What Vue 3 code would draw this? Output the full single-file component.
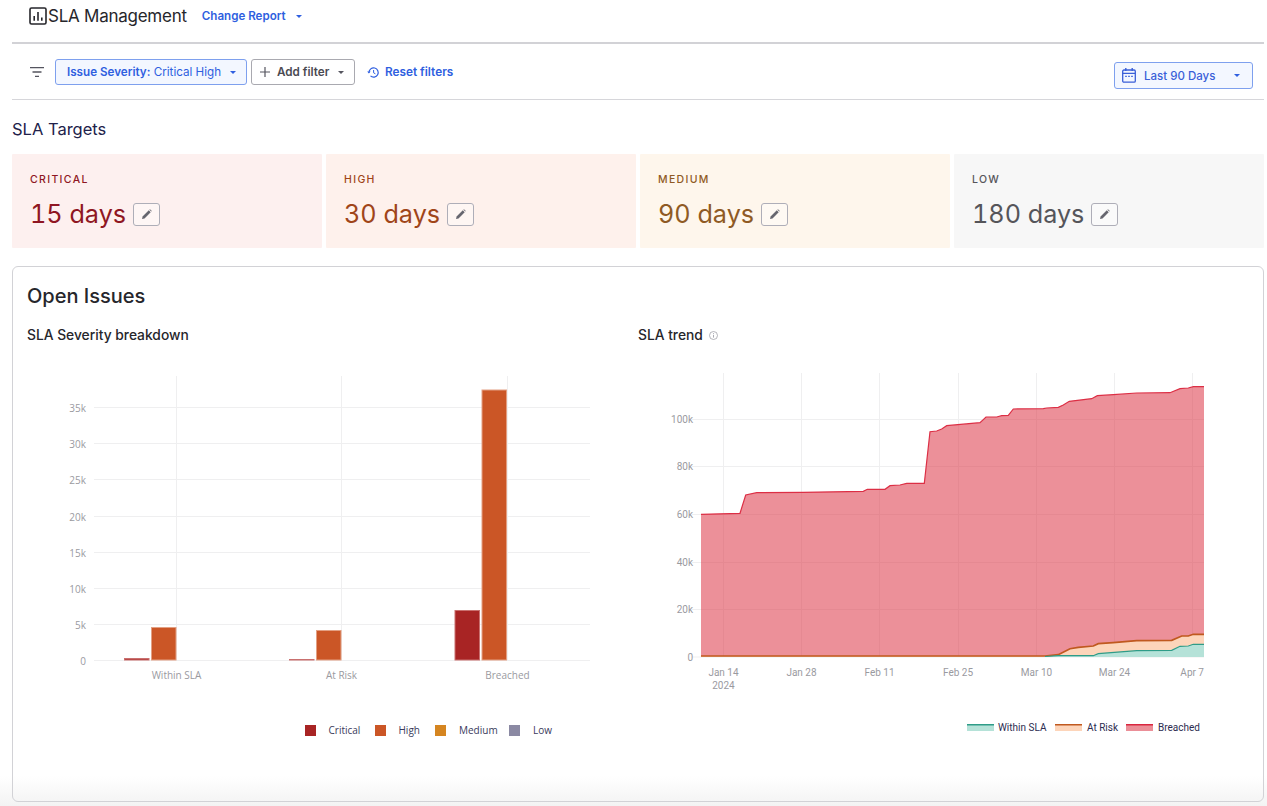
<template>
  <div class="page">
    <header class="top-bar">
      <svg class="report-icon" width="18" height="18" viewBox="0 0 18 18" fill="none">
        <rect x="1" y="1" width="16" height="16" rx="1.5" stroke="#26262b" stroke-width="1.6" />
        <path d="M5.2 9v4.8M9 5v8.8M12.8 10.5v3.3" stroke="#26262b" stroke-width="1.6" />
      </svg>
      <h1 class="report-title">SLA Management</h1>
      <button class="change-report">
        Change Report
        <span class="caret"></span>
      </button>
    </header>

    <section class="filter-bar">
      <div class="filter-left">
        <svg class="filter-icon" width="14" height="10" viewBox="0 0 14 10">
          <path d="M0 .7h14M2.5 5h9M5 9.3h4" stroke="#55555f" stroke-width="1.3" />
        </svg>
        <button class="chip chip-active">
          <span><b>Issue Severity:</b> Critical High</span>
          <span class="caret"></span>
        </button>
        <button class="chip chip-plain">
          <svg width="10" height="10" viewBox="0 0 10 10">
            <path d="M5 0v10M0 5h10" stroke="#55555f" stroke-width="1.2" />
          </svg>
          <span class="add-label">Add filter</span>
          <span class="caret caret-dark"></span>
        </button>
        <button class="reset">
          <svg width="13" height="13" viewBox="0 0 13 13" fill="none">
            <path d="M2 6.5a4.6 4.6 0 1 1 1.5 3.4" stroke="#2f5fe0" stroke-width="1.2" />
            <path d="M.2 5.6h3.4L1.9 7.6z" fill="#2f5fe0" />
            <path d="M6.6 4v2.8l1.8 1" stroke="#2f5fe0" stroke-width="1" />
          </svg>
          Reset filters
        </button>
      </div>
      <button class="date-btn">
        <svg width="14" height="15" viewBox="0 0 14 15" fill="none">
          <rect x=".7" y="2" width="12.6" height="12.2" rx="1.2" stroke="#3a5fd8" stroke-width="1.3" />
          <path d="M.7 5.4h12.6M3.8 0v3M10.2 0v3" stroke="#3a5fd8" stroke-width="1.4" />
          <path d="M3.2 8.4h1.6M6.2 8.4h1.6M9.2 8.4h1.6" stroke="#3a5fd8" stroke-width="1.4" />
        </svg>
        <span class="date-label">Last 90 Days</span>
        <span class="caret"></span>
      </button>
    </section>

    <h2 class="targets-title">SLA Targets</h2>
    <section class="targets">
      <div v-for="t in targets" :key="t.label" class="target" :style="{ background: t.bg, color: t.color }">
        <div class="target-label">{{ t.label }}</div>
        <div class="target-value">
          <span>{{ t.value }}</span>
          <button class="edit">
            <svg width="10" height="10" viewBox="0 0 10 10">
              <path d="M0 10l.6-2.5L6.8 1.3l1.9 1.9L2.5 9.4z" fill="#66666f" />
              <path d="M7.4.7l.6-.5 1.8 1.8-.5.6z" fill="#66666f" />
            </svg>
          </button>
        </div>
      </div>
    </section>

    <section class="issues">
      <h2 class="issues-title">Open Issues</h2>
      <div class="charts">
        <div class="chart-col">
          <h3 class="chart-title">SLA Severity breakdown</h3>
          <svg class="chart" width="585" height="400" viewBox="27 350 585 400">
            <g stroke="#efeff0" stroke-width="1">
              <line v-for="g in barGrid" :key="g.label" x1="94" x2="590" :y1="g.y" :y2="g.y" />
              <line v-for="c in barCats" :key="c.label" :x1="c.x" :x2="c.x" y1="376" y2="660" />
            </g>
            <g class="tick-open">
              <text v-for="g in barGrid" :key="g.label" x="86" :y="g.y + 4" text-anchor="end">{{ g.label }}</text>
              <text v-for="c in barCats" :key="c.label" :x="c.x" y="679" text-anchor="middle">{{ c.label }}</text>
            </g>
            <rect v-for="(b, i) in bars" :key="i" :x="b.x" :y="b.y" width="24.5" :height="660 - b.y"
              :fill="b.color" :stroke="b.edge" stroke-width="1" />
            <g v-for="l in barLegend" :key="l.label">
              <rect :x="l.x" y="725" width="11" height="11" :fill="l.color" />
              <text class="legend-open" :x="l.tx" y="734">{{ l.label }}</text>
            </g>
          </svg>
        </div>
        <div class="chart-col">
          <h3 class="chart-title">
            SLA trend
            <svg class="info" width="9" height="9" viewBox="0 0 9 9" fill="none">
              <circle cx="4.5" cy="4.5" r="4" stroke="#a2a2aa" stroke-width=".8" />
              <path d="M4.5 4v2.6M4.5 2.2v1" stroke="#a2a2aa" stroke-width=".9" />
            </svg>
          </h3>
          <svg class="chart" width="612" height="400" viewBox="638 350 612 400">
            <g stroke="#efeff0" stroke-width="1">
              <line v-for="g in trendGrid" :key="g.label" x1="692" x2="1204" :y1="g.y" :y2="g.y" />
              <line v-for="x in trendCols" :key="x" :x1="x" :x2="x" y1="373" y2="657" />
            </g>
            <path :d="breachedArea" fill="#dc3545" fill-opacity=".55" />
            <path :d="riskArea" fill="#fdd5ba" />
            <path :d="withinArea" fill="#b5e2d8" />
            <polyline :points="pts(breached)" fill="none" stroke="#dc2f45" stroke-width="1.2" />
            <polyline :points="pts(risk)" fill="none" stroke="#c0591f" stroke-width="1.7" />
            <polyline :points="pts(within)" fill="none" stroke="#2f9c88" stroke-width="1.2" />
            <g class="tick-roboto">
              <text v-for="g in trendGrid" :key="g.label" x="693" :y="g.y + 3.5" text-anchor="end">{{ g.label }}</text>
              <text v-for="t in trendTicks" :key="t.label" :x="t.x" y="676" :text-anchor="t.anchor">{{ t.label }}</text>
              <text x="723.5" y="688.5" text-anchor="middle">2024</text>
            </g>
            <g v-for="l in trendLegend" :key="l.label">
              <rect :x="l.x" y="724" width="27" height="7" :fill="l.fill" />
              <rect :x="l.x" y="724" width="27" height="1.5" :fill="l.line" />
              <text class="legend-roboto" :x="l.tx" y="731">{{ l.label }}</text>
            </g>
          </svg>
        </div>
      </div>
    </section>
    <div class="page-fade"></div>
  </div>
</template>

<script setup>
const targets = [
  { label: 'CRITICAL', value: '15 days', bg: '#fdf0ef', color: '#8f1622' },
  { label: 'HIGH', value: '30 days', bg: '#fef1ec', color: '#a04519' },
  { label: 'MEDIUM', value: '90 days', bg: '#fef6ec', color: '#8f5a24' },
  { label: 'LOW', value: '180 days', bg: '#f7f7f7', color: '#55555a' },
]

const barGrid = [
  { label: '0', y: 660.5 },
  { label: '5k', y: 624.5 },
  { label: '10k', y: 588.5 },
  { label: '15k', y: 552.5 },
  { label: '20k', y: 516.5 },
  { label: '25k', y: 479.5 },
  { label: '30k', y: 443.5 },
  { label: '35k', y: 407.5 },
]

const barCats = [
  { label: 'Within SLA', x: 176.5 },
  { label: 'At Risk', x: 341.5 },
  { label: 'Breached', x: 507.5 },
]

const critical = { color: '#a82424', edge: '#c9706f' }
const high = { color: '#cb5626', edge: '#e3a083' }

const bars = [
  { x: 124.5, y: 658.5, ...critical },
  { x: 151.5, y: 627.5, ...high },
  { x: 289.5, y: 659.5, ...critical },
  { x: 316.5, y: 630.5, ...high },
  { x: 455, y: 610.5, ...critical },
  { x: 482, y: 390, ...high },
]

const barLegend = [
  { label: 'Critical', x: 305, tx: 328.5, color: '#a82424' },
  { label: 'High', x: 375, tx: 398.5, color: '#cb5626' },
  { label: 'Medium', x: 435, tx: 459, color: '#d58520' },
  { label: 'Low', x: 509, tx: 533, color: '#8b89a3' },
]

const trendGrid = [
  { label: '0', y: 657 },
  { label: '20k', y: 609.5 },
  { label: '40k', y: 562.5 },
  { label: '60k', y: 514.5 },
  { label: '80k', y: 466.5 },
  { label: '100k', y: 419.5 },
]

const trendCols = [723.5, 801.5, 879.5, 958.5, 1036.5, 1114.5, 1192.5]

const trendTicks = [
  { label: 'Jan 14', x: 723.5, anchor: 'middle' },
  { label: 'Jan 28', x: 801.5, anchor: 'middle' },
  { label: 'Feb 11', x: 879.5, anchor: 'middle' },
  { label: 'Feb 25', x: 958, anchor: 'middle' },
  { label: 'Mar 10', x: 1036.5, anchor: 'middle' },
  { label: 'Mar 24', x: 1114.5, anchor: 'middle' },
  { label: 'Apr 7', x: 1204, anchor: 'end' },
]

const trendLegend = [
  { label: 'Within SLA', x: 967, tx: 998, fill: '#b5e2d8', line: '#2f9c88' },
  { label: 'At Risk', x: 1055, tx: 1087, fill: '#fdd5ba', line: '#c0591f' },
  { label: 'Breached', x: 1126, tx: 1158, fill: '#eb8f98', line: '#d9263f' },
]

// traced from the reference curves
const breached = [
  [701, 514.3], [740, 513.3], [745.7, 495], [756.7, 492.7], [803.3, 492.3], [863.3, 491.3],
  [867.3, 489.3], [885, 489.3], [890, 485.7], [900, 485], [906.7, 483.3], [924.3, 483.3],
  [930, 431.7], [936.7, 431], [941.7, 429], [946.7, 425.7], [980, 422.7], [986, 417],
  [996.7, 417], [1001.7, 415.7], [1008.3, 415.3], [1013.3, 409], [1043.3, 408.7], [1046.7, 408],
  [1058.3, 407.3], [1063.3, 405], [1069.3, 401.3], [1091.7, 398.7], [1097.3, 395.7], [1113.3, 394.7],
  [1136.7, 393], [1170, 392.7], [1180, 388.7], [1188.3, 388], [1193.3, 386.7], [1204, 386.7],
]

const risk = [
  [701, 656], [1045, 656], [1058.3, 654.7], [1070, 648.7], [1078.3, 647.3], [1093.3, 646],
  [1098.3, 643.7], [1113.3, 642.7], [1136.7, 640.7], [1171.7, 640.3], [1181.7, 636], [1188.3, 636],
  [1193.3, 634.3], [1204, 634.3],
]

const within = [
  [1045, 656.5], [1058.3, 655.7], [1093.3, 655.7], [1098.3, 653.7], [1136.7, 650.7], [1171.7, 650.3],
  [1180, 646.3], [1188.3, 646], [1193.3, 644.3], [1204, 644.3],
]

const pts = (list) => list.map((p) => p.join(',')).join(' ')
const area = (list) => `M${list[0][0]} 657L${list.map((p) => p.join(' ')).join('L')}L${list[list.length - 1][0]} 657Z`

const breachedArea = area(breached)
const riskArea = area(risk)
const withinArea = area(within)
</script>

<style>
html,
body {
  background: #fff;
}
</style>

<style scoped>
.page {
  height: 806px;
  overflow: hidden;
  display: flex;
  flex-direction: column;
  padding: 0 3px 0 12px;
  font-family: Inter, "Liberation Sans", sans-serif;
  color: #26262b;
  position: relative;
}

button {
  font-family: inherit;
  background: none;
  border: none;
  padding: 0;
  cursor: pointer;
}

h1,
h2,
h3 {
  margin: 0;
}

.caret {
  display: inline-block;
  flex: none;
  width: 0;
  height: 0;
  border-left: 3px solid transparent;
  border-right: 3px solid transparent;
  border-top: 3px solid #2f5fe0;
}

.caret-dark {
  border-top-color: #55555f;
}

/* top bar */
.top-bar {
  height: 42px;
  box-sizing: content-box;
  flex: none;
  display: flex;
  align-items: flex-start;
  border-bottom: 2px solid #d2d2d6;
}

.report-icon {
  margin: 7px 1px 0 17px;
}

.report-title {
  font-size: 17px;
  font-weight: 400;
  line-height: 22px;
  margin-top: 5px;
  letter-spacing: -0.25px;
  white-space: nowrap;
}

.change-report {
  margin: 8px 0 0 15px;
  display: flex;
  align-items: center;
  gap: 10px;
  font-size: 11.6px;
  font-weight: 600;
  line-height: 16px;
  color: #2f5fe0;
}

/* filters */
.filter-bar {
  height: 55px;
  flex: none;
  display: flex;
  justify-content: space-between;
  border-bottom: 1px solid #d6d6da;
}

.filter-left {
  display: flex;
  align-items: flex-start;
  padding: 15px 0 0 18px;
}

.filter-icon {
  margin: 8px 11px 0 0;
}

.chip {
  height: 26px;
  box-sizing: border-box;
  display: flex;
  align-items: center;
  border-radius: 3px;
  white-space: nowrap;
}

.chip-active {
  width: 192px;
  padding: 0 11px;
  gap: 9px;
  font-size: 11.65px;
  background: #f3f7ff;
  border: 1px solid #7ea0ee;
  color: #2f5fe0;
}

.chip-active b {
  font-weight: 600;
}

.chip-plain {
  width: 104px;
  margin-left: 4px;
  padding: 0 10px 0 8px;
  font-size: 11.7px;
  background: #fff;
  border: 1px solid #a9a9b0;
  color: #4a4a52;
  font-weight: 600;
}

.add-label {
  margin: 0 auto 0 7px;
}

.reset {
  margin: 5px 0 0 12px;
  display: flex;
  align-items: center;
  gap: 5px;
  font-size: 11.8px;
  font-weight: 600;
  line-height: 16px;
  color: #2f5fe0;
  white-space: nowrap;
}

.date-btn {
  margin: 18px 11px 0 0;
  width: 139px;
  height: 27px;
  box-sizing: border-box;
  padding: 0 12px 0 7px;
  display: flex;
  align-items: center;
  background: #f3f7ff;
  border: 1px solid #7ea0ee;
  border-radius: 3px;
  color: #3a5fd8;
  font-size: 11.5px;
  font-weight: 500;
}

.date-label {
  margin: 0 auto 0 8px;
}

/* targets */
.targets-title {
  flex: none;
  margin-top: 18px;
  font-size: 16.5px;
  font-weight: 400;
  line-height: 22px;
  color: #21214a;
}

.targets {
  flex: none;
  margin-top: 14px;
  display: grid;
  grid-template-columns: repeat(4, 1fr);
  gap: 4px;
  height: 94px;
}

.target {
  padding: 19px 18px 0;
  border-radius: 1px;
}

.target-label {
  font-size: 10.5px;
  font-weight: 500;
  line-height: 13px;
  letter-spacing: 1.35px;
}

.target-value {
  margin-top: 12px;
  display: flex;
  align-items: center;
  font-size: 25.2px;
  font-variant-numeric: tabular-nums;
  line-height: 32px;
}

.edit {
  margin-left: 7px;
  width: 27px;
  height: 23px;
  display: flex;
  align-items: center;
  justify-content: center;
  border: 1px solid #aeaeb8;
  border-radius: 3px;
  background: rgba(255, 255, 255, 0.4);
}

/* open issues */
.issues {
  flex: none;
  margin-top: 18px;
  height: 536px;
  box-sizing: border-box;
  padding: 17px 14px 0;
  border: 1px solid #d2d2d6;
  border-radius: 6px;
  position: relative;
  z-index: 1;
}

.issues-title {
  font-size: 20px;
  font-weight: 500;
  line-height: 24px;
}

.charts {
  margin-top: 17px;
  display: grid;
  grid-template-columns: 611px 612px;
}

.chart-title {
  height: 22px;
  font-size: 13.8px;
  font-weight: 500;
  line-height: 18px;
  display: flex;
  align-items: center;
  gap: 6px;
  margin-top: -1px;
}

.info {
  margin-top: 1px;
}

.chart {
  display: block;
  margin-top: 4px;
}

.tick-open text {
  font-family: "Open Sans", sans-serif;
  font-size: 10px;
  fill: #9a9a9f;
}

.legend-open {
  font-family: "Open Sans", sans-serif;
  font-size: 10px;
  fill: #3a3a5c;
}

.tick-roboto text {
  font-family: Roboto, sans-serif;
  font-size: 10px;
  fill: #9a9a9f;
}

.legend-roboto {
  font-family: Roboto, sans-serif;
  font-size: 10px;
  fill: #2c2c50;
}

/* soft fade at the bottom of the window, behind the card border */
.page-fade {
  position: absolute;
  left: 0;
  right: 0;
  bottom: 0;
  height: 30px;
  background: linear-gradient(rgba(240, 240, 240, 0), #f3f3f3);
  pointer-events: none;
}
</style>
